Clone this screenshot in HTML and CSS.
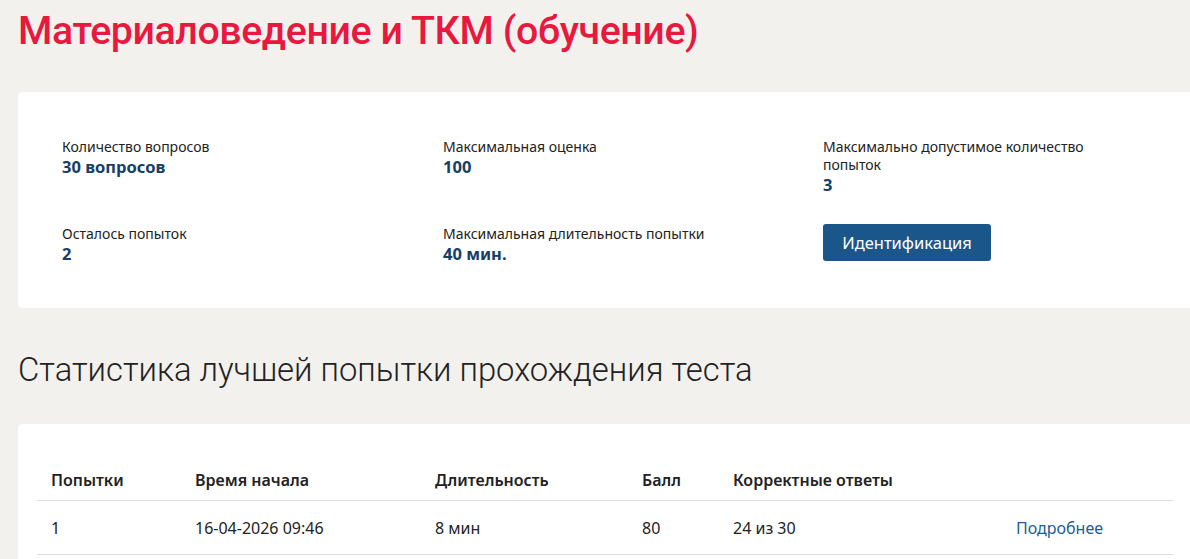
FILE: index.html
```html
<!DOCTYPE html>
<html lang="ru">
<head>
<meta charset="utf-8">
<title>Материаловедение и ТКМ (обучение)</title>
<link rel="stylesheet" href="styles.css">
</head>
<body>
<div class="page">
  <h1 class="title">Материаловедение и ТКМ (обучение)</h1>

  <section class="card info">
    <div class="info-grid">
      <div class="item">
        <div class="label">Количество вопросов</div>
        <div class="value">30 вопросов</div>
      </div>
      <div class="item">
        <div class="label">Максимальная оценка</div>
        <div class="value">100</div>
      </div>
      <div class="item narrow">
        <div class="label">Максимально допустимое количество попыток</div>
        <div class="value">3</div>
      </div>
      <div class="item">
        <div class="label">Осталось попыток</div>
        <div class="value">2</div>
      </div>
      <div class="item">
        <div class="label">Максимальная длительность попытки</div>
        <div class="value">40 мин.</div>
      </div>
      <div class="item">
        <button class="btn" type="button">Идентификация</button>
      </div>
    </div>
  </section>

  <h2 class="subtitle">Статистика лучшей попытки прохождения теста</h2>

  <section class="card stats">
    <table class="table">
      <thead>
        <tr>
          <th class="c1">Попытки</th>
          <th class="c2">Время начала</th>
          <th class="c3">Длительность</th>
          <th class="c4">Балл</th>
          <th class="c5">Корректные ответы</th>
          <th class="c6"></th>
        </tr>
      </thead>
      <tbody>
        <tr>
          <td>1</td>
          <td>16-04-2026 09:46</td>
          <td>8 мин</td>
          <td>80</td>
          <td>24 из 30</td>
          <td><a class="link" href="#">Подробнее</a></td>
        </tr>
      </tbody>
    </table>
  </section>
</div>
</body>
</html>
```

FILE: styles.css
```css
html, body {
  margin: 0;
  padding: 0;
}
body {
  background: #f3f1ee;
  font-family: "Noto Sans", "Open Sans", sans-serif;
  color: #222;
  overflow: hidden;
}
.page {
  width: 1174px;
  padding: 0 0 0 18px;
}
.title {
  margin: 0;
  padding-top: 8px;
  height: 92px;
  box-sizing: border-box;
  font-family: Roboto, sans-serif;
  font-weight: 500;
  font-size: 39.3px;
  line-height: 46px;
  letter-spacing: -0.4px;
  color: #e8183e;
}
.card {
  background: #fff;
  border-radius: 4px;
}
.info {
  padding: 46px 0 43px 44px;
}
.info-grid {
  display: grid;
  grid-template-columns: 381px 380px 300px;
  row-gap: 29px;
}
.label {
  font-size: 14px;
  line-height: 18px;
  color: #222;
}
.narrow .label {
  width: 290px;
}
.value {
  font-size: 16.5px;
  line-height: 22px;
  font-weight: 700;
  color: #163e66;
}
.btn {
  display: block;
  width: 168px;
  height: 37px;
  margin-top: -1px;
  border: 0;
  border-radius: 3px;
  background: #1b568a;
  color: #fff;
  font-family: "Noto Sans", "Open Sans", sans-serif;
  font-size: 16.5px;
  padding: 0;
}
.subtitle {
  margin: 0;
  padding-top: 42px;
  height: 116px;
  box-sizing: border-box;
  font-family: Roboto, sans-serif;
  font-weight: 300;
  font-size: 32.8px;
  line-height: 40px;
  color: #222;
}
.stats {
  padding: 36px 0 40px 19px;
}
.table {
  width: 1136px;
  border-collapse: collapse;
  font-size: 16px;
  color: #222;
}
.table th {
  text-align: left;
  font-weight: 600;
  padding: 8px 14px;
  height: 24px;
  line-height: 24px;
  border-bottom: 1px solid #dedede;
}
.table td {
  padding: 14px 14px 12px;
  line-height: 27px;
  border-bottom: 1px solid #dedede;
}
.c1 { width: 116px; }
.c2 { width: 212px; }
.c3 { width: 179px; }
.c4 { width: 63px; }
.c5 { width: 255px; }
.link {
  color: #1e5c96;
  text-decoration: none;
}
```
